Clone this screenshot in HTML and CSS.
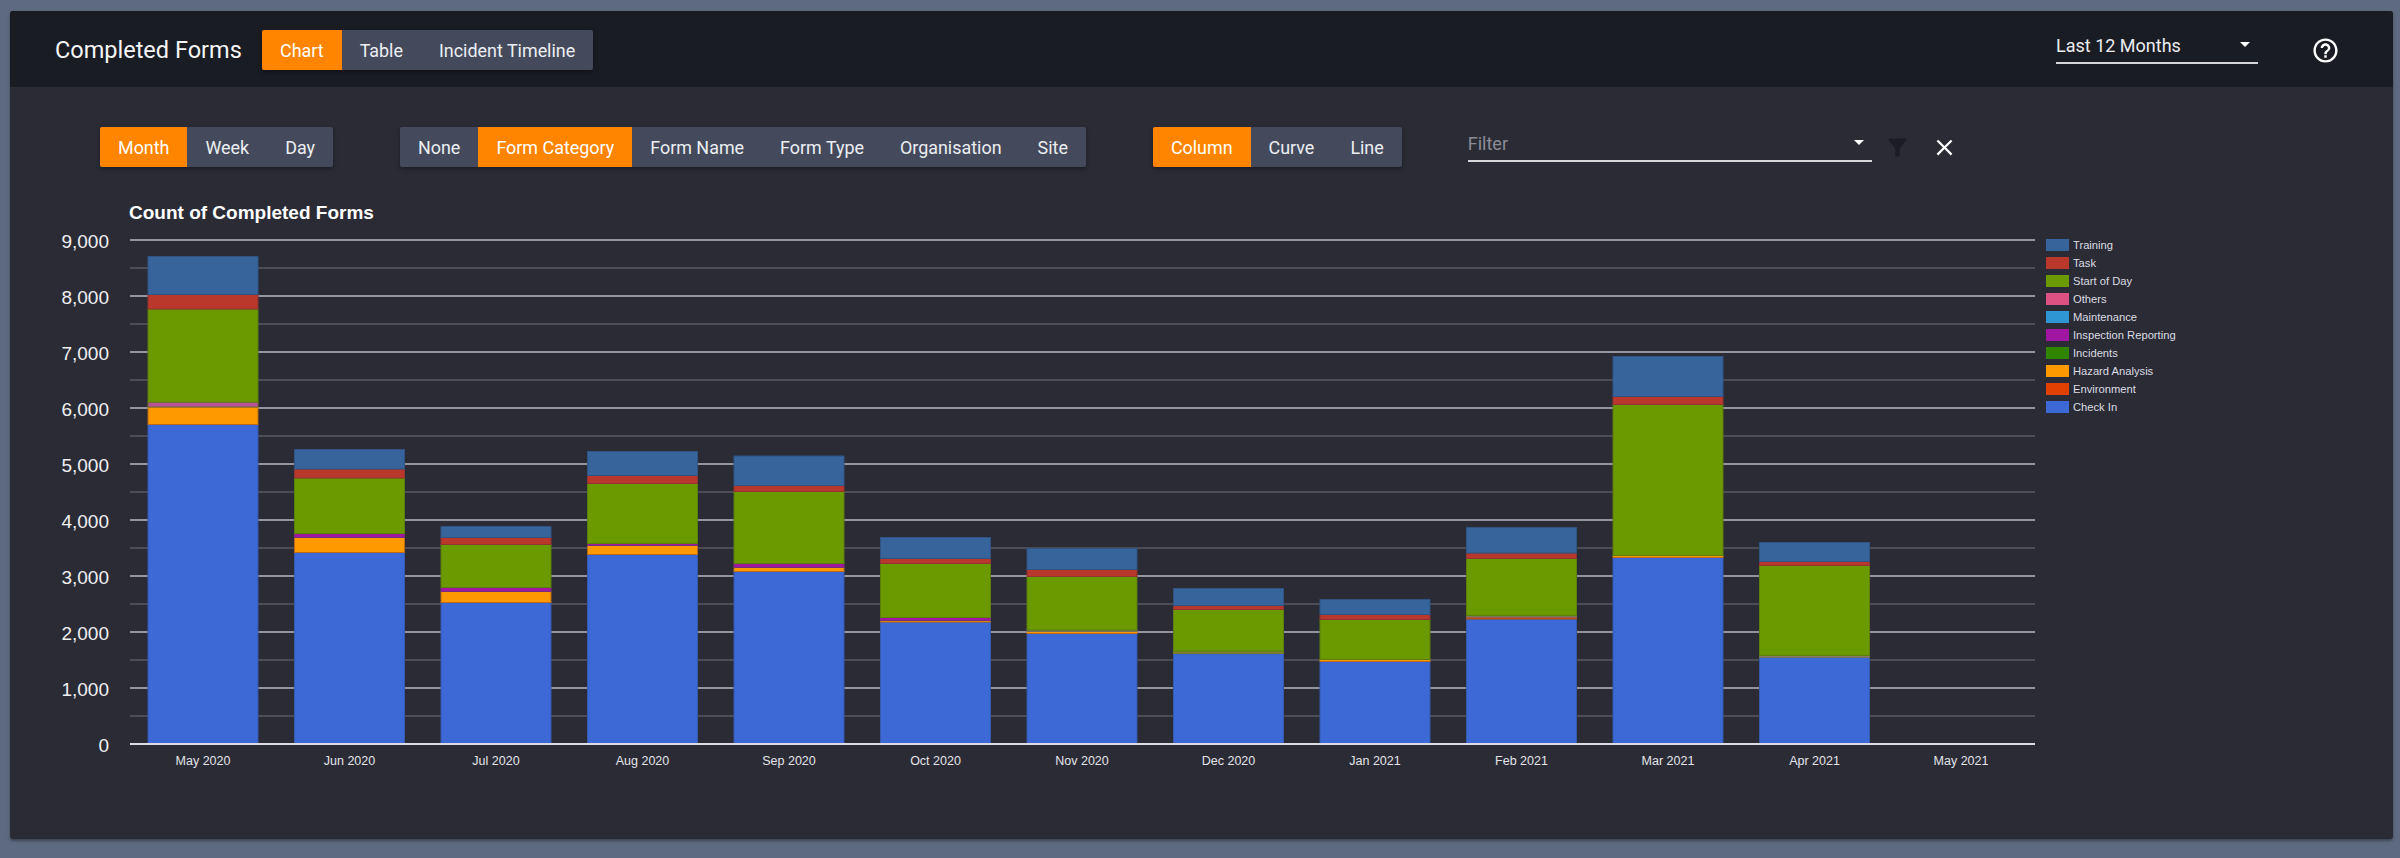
FILE: index.html
```html
<!DOCTYPE html>
<html lang="en">
<head>
<meta charset="utf-8">
<title>Completed Forms</title>
<link rel="stylesheet" href="styles.css">
</head>
<body>
<main class="card">
  <header class="header">
    <h1 class="title">Completed Forms</h1>
    <div class="btn-group">
      <button class="btn active">Chart</button>
      <button class="btn">Table</button>
      <button class="btn">Incident Timeline</button>
    </div>
    <div class="select range">
      <span>Last 12 Months</span>
      <i class="caret"></i>
    </div>
    <svg class="help" viewBox="0 0 24 24"><path d="M11 18h2v-2h-2v2zm1-16C6.48 2 2 6.48 2 12s4.48 10 10 10 10-4.48 10-10S17.52 2 12 2zm0 18c-4.41 0-8-3.59-8-8s3.59-8 8-8 8 3.59 8 8-3.59 8-8 8zm0-14c-2.21 0-4 1.79-4 4h2c0-1.1.9-2 2-2s2 .9 2 2c0 2-3 1.75-3 5h2c0-2.25 3-2.5 3-5 0-2.21-1.79-4-4-4z"/></svg>
  </header>

  <section class="toolbar">
    <div class="btn-group">
      <button class="btn active">Month</button>
      <button class="btn">Week</button>
      <button class="btn">Day</button>
    </div>
    <div class="btn-group">
      <button class="btn">None</button>
      <button class="btn active">Form Category</button>
      <button class="btn">Form Name</button>
      <button class="btn">Form Type</button>
      <button class="btn">Organisation</button>
      <button class="btn">Site</button>
    </div>
    <div class="btn-group">
      <button class="btn active">Column</button>
      <button class="btn">Curve</button>
      <button class="btn">Line</button>
    </div>
    <div class="select filter">
      <span>Filter</span>
      <i class="caret"></i>
    </div>
    <div class="filter-icons">
      <svg class="icon funnel" viewBox="0 0 24 24"><path d="M4.25 5.61C6.27 8.2 10 13 10 13v6c0 .55.45 1 1 1h2c.55 0 1-.45 1-1v-6s3.73-4.8 5.75-7.39C20.26 4.95 19.79 4 18.95 4H5.04c-.83 0-1.3.95-.79 1.61z"/></svg>
      <svg class="icon close" viewBox="0 0 24 24"><path d="M19 6.41L17.59 5 12 10.59 6.41 5 5 6.41 10.59 12 5 17.59 6.41 19 12 13.41 17.59 19 19 17.59 13.41 12z"/></svg>
    </div>
  </section>

  <section class="chart-row">
    <svg class="chart" width="2030" height="580" viewBox="10 200 2030 580">
      <text class="chart-title" x="129" y="219">Count of Completed Forms</text>

      <g class="minor">
        <line x1="130" x2="2035" y1="268" y2="268"/><line x1="130" x2="2035" y1="324" y2="324"/>
        <line x1="130" x2="2035" y1="380" y2="380"/><line x1="130" x2="2035" y1="436" y2="436"/>
        <line x1="130" x2="2035" y1="492" y2="492"/><line x1="130" x2="2035" y1="548" y2="548"/>
        <line x1="130" x2="2035" y1="604" y2="604"/><line x1="130" x2="2035" y1="660" y2="660"/>
        <line x1="130" x2="2035" y1="716" y2="716"/>
      </g>
      <g class="major">
        <line x1="130" x2="2035" y1="240" y2="240"/><line x1="130" x2="2035" y1="296" y2="296"/>
        <line x1="130" x2="2035" y1="352" y2="352"/><line x1="130" x2="2035" y1="408" y2="408"/>
        <line x1="130" x2="2035" y1="464" y2="464"/><line x1="130" x2="2035" y1="520" y2="520"/>
        <line x1="130" x2="2035" y1="576" y2="576"/><line x1="130" x2="2035" y1="632" y2="632"/>
        <line x1="130" x2="2035" y1="688" y2="688"/>
      </g>

      <g class="y-labels">
        <text x="109" y="248">9,000</text><text x="109" y="304">8,000</text><text x="109" y="360">7,000</text>
        <text x="109" y="416">6,000</text><text x="109" y="472">5,000</text><text x="109" y="528">4,000</text>
        <text x="109" y="584">3,000</text><text x="109" y="640">2,000</text><text x="109" y="696">1,000</text>
        <text x="109" y="752">0</text>
      </g>

      <g class="bars">
        <!-- May 2020 -->
        <rect class="s-check" x="148" y="424.5" width="110" height="319.5"/>
        <rect class="s-hazard" x="148" y="407" width="110" height="17.5"/>
        <rect class="s-others" x="148" y="402" width="110" height="5"/>
        <rect class="s-start" x="148" y="309" width="110" height="93"/>
        <rect class="s-task" x="148" y="294.5" width="110" height="14.5"/>
        <rect class="s-train" x="148" y="256.5" width="110" height="38"/>
        <!-- Jun 2020 -->
        <rect class="s-check" x="294.5" y="552.5" width="110" height="191.5"/>
        <rect class="s-hazard" x="294.5" y="537.5" width="110" height="15"/>
        <rect class="s-inspect" x="294.5" y="533.5" width="110" height="4"/>
        <rect class="s-start" x="294.5" y="478" width="110" height="55.5"/>
        <rect class="s-task" x="294.5" y="469" width="110" height="9"/>
        <rect class="s-train" x="294.5" y="449.5" width="110" height="19.5"/>
        <!-- Jul 2020 -->
        <rect class="s-check" x="441" y="602.5" width="110" height="141.5"/>
        <rect class="s-hazard" x="441" y="591.5" width="110" height="11"/>
        <rect class="s-inspect" x="441" y="587.5" width="110" height="4"/>
        <rect class="s-start" x="441" y="544.5" width="110" height="43"/>
        <rect class="s-task" x="441" y="537.5" width="110" height="7"/>
        <rect class="s-train" x="441" y="526.5" width="110" height="11"/>
        <!-- Aug 2020 -->
        <rect class="s-check" x="587.5" y="554.5" width="110" height="189.5"/>
        <rect class="s-hazard" x="587.5" y="545.5" width="110" height="9"/>
        <rect class="s-inspect" x="587.5" y="543.5" width="110" height="2"/>
        <rect class="s-start" x="587.5" y="483.5" width="110" height="60"/>
        <rect class="s-task" x="587.5" y="475.5" width="110" height="8"/>
        <rect class="s-train" x="587.5" y="451.5" width="110" height="24"/>
        <!-- Sep 2020 -->
        <rect class="s-check" x="734" y="571.5" width="110" height="172.5"/>
        <rect class="s-hazard" x="734" y="567.5" width="110" height="4"/>
        <rect class="s-inspect" x="734" y="563.5" width="110" height="4"/>
        <rect class="s-start" x="734" y="491.5" width="110" height="72"/>
        <rect class="s-task" x="734" y="485.5" width="110" height="6"/>
        <rect class="s-train" x="734" y="456" width="110" height="29.5"/>
        <!-- Oct 2020 -->
        <rect class="s-check" x="880.5" y="622" width="110" height="122"/>
        <rect class="s-hazard" x="880.5" y="620.5" width="110" height="1.5"/>
        <rect class="s-inspect" x="880.5" y="617.5" width="110" height="3"/>
        <rect class="s-start" x="880.5" y="563.5" width="110" height="54"/>
        <rect class="s-task" x="880.5" y="558.5" width="110" height="5"/>
        <rect class="s-train" x="880.5" y="537.5" width="110" height="21"/>
        <!-- Nov 2020 -->
        <rect class="s-check" x="1027" y="633.5" width="110" height="110.5"/>
        <rect class="s-hazard" x="1027" y="631.5" width="110" height="2"/>
        <rect class="s-gray" x="1027" y="630" width="110" height="1.5"/>
        <rect class="s-start" x="1027" y="576.5" width="110" height="53.5"/>
        <rect class="s-task" x="1027" y="569.5" width="110" height="7"/>
        <rect class="s-train" x="1027" y="548.5" width="110" height="21"/>
        <!-- Dec 2020 -->
        <rect class="s-check" x="1173.5" y="653.5" width="110" height="90.5"/>
        <rect class="s-olive" x="1173.5" y="651" width="110" height="2.5"/>
        <rect class="s-start" x="1173.5" y="609.5" width="110" height="41.5"/>
        <rect class="s-task" x="1173.5" y="605.5" width="110" height="4"/>
        <rect class="s-train" x="1173.5" y="588.5" width="110" height="17"/>
        <!-- Jan 2021 -->
        <rect class="s-check" x="1320" y="661.5" width="110" height="82.5"/>
        <rect class="s-hazard" x="1320" y="659.5" width="110" height="2"/>
        <rect class="s-start" x="1320" y="619.5" width="110" height="40"/>
        <rect class="s-task" x="1320" y="614.5" width="110" height="5"/>
        <rect class="s-train" x="1320" y="599.5" width="110" height="15"/>
        <!-- Feb 2021 -->
        <rect class="s-check" x="1466.5" y="619" width="110" height="125"/>
        <rect class="s-env" x="1466.5" y="617" width="110" height="2"/>
        <rect class="s-gray" x="1466.5" y="615.5" width="110" height="1.5"/>
        <rect class="s-start" x="1466.5" y="558.5" width="110" height="57"/>
        <rect class="s-task" x="1466.5" y="553" width="110" height="5.5"/>
        <rect class="s-train" x="1466.5" y="527.5" width="110" height="25.5"/>
        <!-- Mar 2021 -->
        <rect class="s-check" x="1613" y="557.5" width="110" height="186.5"/>
        <rect class="s-hazard" x="1613" y="555.5" width="110" height="2"/>
        <rect class="s-start" x="1613" y="404.5" width="110" height="151"/>
        <rect class="s-task" x="1613" y="396.5" width="110" height="8"/>
        <rect class="s-train" x="1613" y="356.5" width="110" height="40"/>
        <!-- Apr 2021 -->
        <rect class="s-check" x="1759.5" y="657.5" width="110" height="86.5"/>
        <rect class="s-gray" x="1759.5" y="655.5" width="110" height="2"/>
        <rect class="s-start" x="1759.5" y="565.5" width="110" height="90"/>
        <rect class="s-task" x="1759.5" y="561.5" width="110" height="4"/>
        <rect class="s-train" x="1759.5" y="542.5" width="110" height="19"/>
      </g>

      <line class="axis" x1="130" x2="2035" y1="744" y2="744"/>

      <g class="x-labels">
        <text x="203" y="765">May 2020</text><text x="349.5" y="765">Jun 2020</text><text x="496" y="765">Jul 2020</text>
        <text x="642.5" y="765">Aug 2020</text><text x="789" y="765">Sep 2020</text><text x="935.5" y="765">Oct 2020</text>
        <text x="1082" y="765">Nov 2020</text><text x="1228.5" y="765">Dec 2020</text><text x="1375" y="765">Jan 2021</text>
        <text x="1521.5" y="765">Feb 2021</text><text x="1668" y="765">Mar 2021</text><text x="1814.5" y="765">Apr 2021</text>
        <text x="1961" y="765">May 2021</text>
      </g>
    </svg>

    <ul class="legend">
      <li><i class="swatch c-train"></i>Training</li>
      <li><i class="swatch c-task"></i>Task</li>
      <li><i class="swatch c-start"></i>Start of Day</li>
      <li><i class="swatch c-others"></i>Others</li>
      <li><i class="swatch c-maint"></i>Maintenance</li>
      <li><i class="swatch c-inspect"></i>Inspection Reporting</li>
      <li><i class="swatch c-incid"></i>Incidents</li>
      <li><i class="swatch c-hazard"></i>Hazard Analysis</li>
      <li><i class="swatch c-env"></i>Environment</li>
      <li><i class="swatch c-check"></i>Check In</li>
    </ul>
  </section>
</main>
</body>
</html>
```

FILE: styles.css
```css
* { box-sizing: border-box; }

html, body { height: 100%; }

body {
  margin: 0;
  padding: 11px 7px 19px 10px;
  background: #5e6a80;
  font-family: Roboto, "Liberation Sans", sans-serif;
  overflow: hidden;
}

.card {
  height: 100%;
  background: #2b2b36;
  border-radius: 3px;
  overflow: hidden;
  box-shadow: 0 2px 3px rgba(0, 0, 0, .35);
}

.header {
  display: flex;
  align-items: center;
  height: 76px;
  padding: 2px 53px 0 45px;
  background: #1a1c24;
}

.title {
  width: 185px;
  margin: 0 22px 0 0;
  font-size: 23.5px;
  font-weight: 400;
  color: #f5f5f5;
  white-space: nowrap;
}

.btn-group {
  display: flex;
  height: 40px;
  border-radius: 2px;
  overflow: hidden;
  background: #444a5c;
  box-shadow: 0 2px 4px rgba(0, 0, 0, .35);
  flex: none;
}

.btn {
  padding: 0 18px;
  border: 0;
  background: none;
  color: #eceef2;
  font: 400 17.92px Roboto, sans-serif;
  white-space: nowrap;
}

.btn.active {
  background: #ff8400;
  color: #fff;
}

.select {
  position: relative;
  display: flex;
  align-items: center;
  border-bottom: 2px solid #d6d6da;
  font-size: 18px;
}

.range {
  width: 202px;
  height: 33px;
  margin: 0 53px 5px auto;
  padding-bottom: 2px;
  color: #ececf0;
}

.filter {
  width: 404px;
  height: 35px;
  color: #8c8c96;
}

.caret {
  margin-left: auto;
  margin-right: 8px;
  margin-bottom: 3px;
  border-left: 5px solid transparent;
  border-right: 5px solid transparent;
  border-top: 5px solid #fff;
}

.help {
  width: 29px;
  height: 29px;
  fill: #fff;
  flex: none;
}

.toolbar {
  display: flex;
  gap: 67px;
  padding: 40px 0 0 90px;
}

.toolbar .filter { align-self: flex-start; margin-left: -1px; }

.filter-icons {
  display: flex;
  align-items: center;
  gap: 20px;
  margin-left: -55px;
}

.icon { width: 27px; height: 27px; }
.funnel { fill: #1b1c24; }
.close { fill: #fff; }

.chart-row {
  display: flex;
  margin-top: 33px;
}

.chart { display: block; flex: none; }

.chart-title {
  font: 700 19px "Liberation Sans", Arial, sans-serif;
  fill: #fff;
}

.minor line { stroke: #5a5a64; stroke-width: 1.5; }
.major line { stroke: #b9b9c2; stroke-width: 1.5; }
.axis { stroke: #dcdce2; stroke-width: 2; }

.y-labels text {
  font: 19px "Liberation Sans", Arial, sans-serif;
  fill: #f0f0f0;
  text-anchor: end;
}

.x-labels text {
  font: 12.5px "Liberation Sans", Arial, sans-serif;
  fill: #e4e4e8;
  text-anchor: middle;
}

.bars rect { stroke-width: 1; }
.s-train { fill: #38649c; stroke: #2f5484; }
.s-task { fill: #b9372b; stroke: #8f3430; }
.s-start { fill: #6b9900; stroke: #5b7f0a; }
.s-others { fill: #b8509a; stroke: #6f6a30; }
.s-inspect { fill: #a016a0; stroke: #74307c; }
.s-gray { fill: #8a7a70; stroke: #756f55; }
.s-olive { fill: #7f8030; stroke: #727a20; }
.s-hazard { fill: #ff9900; stroke: #b86a18; }
.s-env { fill: #c8501c; stroke: #a84a20; }
.s-check { fill: #3c69d6; stroke: #3459ad; }

.legend {
  display: flex;
  flex-direction: column;
  margin: 36px 0 0 6px;
  padding: 0;
  list-style: none;
  font: 11.2px/18px "Liberation Sans", Arial, sans-serif;
  color: #dcdce2;
}

.legend li {
  display: flex;
  align-items: center;
  gap: 4px;
  height: 18px;
  white-space: nowrap;
}

.swatch {
  width: 23px;
  height: 12px;
  flex: none;
}

.c-train { background: #38649c; }
.c-task { background: #b9372b; }
.c-start { background: #6b9900; }
.c-others { background: #dd5182; }
.c-maint { background: #2e96d2; }
.c-inspect { background: #a016a0; }
.c-incid { background: #2f8500; }
.c-hazard { background: #ff9900; }
.c-env { background: #e04000; }
.c-check { background: #3c69d6; }
```
